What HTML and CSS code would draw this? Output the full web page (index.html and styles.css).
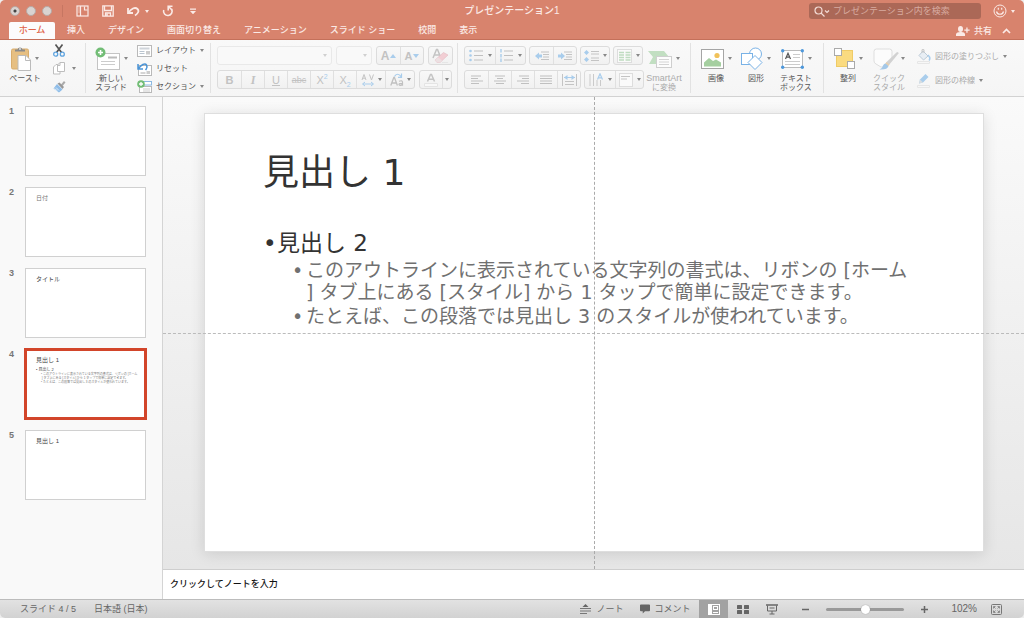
FILE: index.html
```html
<!DOCTYPE html>
<html lang="ja">
<head>
<meta charset="utf-8">
<title>プレゼンテーション1</title>
<link rel="stylesheet" href="styles.css">
</head>
<body>
<svg class="defs" aria-hidden="true">
  <symbol id="caret" viewBox="0 0 4 3"><path d="M0 0h4L2 3z" fill="currentColor"/></symbol>
</svg>
<div class="app">
  <header class="header">
    <div class="titlebar">
      <div class="title-left">
        <div class="lights"><button class="light edited" aria-label="閉じる"></button><button class="light" aria-label="しまう"></button><button class="light" aria-label="拡大"></button></div>
        <div class="quick">
          <button class="bare" aria-label="サイドバー"><svg width="13" height="12" viewBox="0 0 13 12" fill="none" stroke="currentColor" stroke-width="1.2"><rect x="1" y="1" width="11" height="10"/><path d="M4.500 1v10M8.500 1.500v3.500h3M2.500 3h1M2.500 5h1M2.500 7h1"/></svg></button>
          <button class="bare" aria-label="保存"><svg width="12" height="12" viewBox="0 0 12 12" fill="none" stroke="currentColor" stroke-width="1.3"><path d="M.8.8h10.400v10.400H.8z"/><path d="M2.500 1v4.500h7V1M3.500 11V8h5v3"/><path d="M5 8.500v2.500" stroke-width="1.600"/></svg></button>
          <button class="bare undo" aria-label="元に戻す"><svg width="13" height="11" viewBox="0 0 13 11" fill="none" stroke="currentColor" stroke-width="1.800"><path d="M1 2v5h5"/><path d="M1.500 6.500C4 3 8 .5 10.500 3c2 2 .5 4.500-2.500 6.500"/></svg><svg class="caret"><use href="#caret"/></svg></button>
          <button class="bare redo" aria-label="やり直し"><svg width="12" height="12" viewBox="0 0 12 12" fill="none" stroke="currentColor" stroke-width="1.600"><path d="M1.700 5A4.300 4.300 0 1 0 9.500 4"/><path d="M10.500 1.200H6.200v4.300"/><path d="M6.500 1.500L10 5"/></svg></button>
          <button class="bare" aria-label="カスタマイズ"><svg width="8" height="7" viewBox="0 0 8 7"><path d="M1 .5h6v1.200H1zM1 3h6L4 6.200z" fill="currentColor"/></svg></button>
        </div>
      </div>
      <h1 class="doc-title">プレゼンテーション1</h1>
      <div class="title-right">
        <label class="search"><svg width="16" height="11" viewBox="0 0 16 11" fill="none" stroke="#f3dcd6" stroke-width="1.200"><circle cx="4.500" cy="4.500" r="3.500"/><path d="M7 7l3.500 3.500M11 4.500l2 2 2-2"/></svg><input type="search" placeholder="プレゼンテーション内を検索" aria-label="プレゼンテーション内を検索"></label>
        <button class="bare smile" aria-label="フィードバック"><svg width="14" height="14" viewBox="0 0 14 14" fill="none" stroke="currentColor"><circle cx="7" cy="7" r="6"/><path d="M3.500 7.500a3.600 3.600 0 0 0 7 0M5.300 3.800v2M8.700 3.800v2" stroke-width="1.200"/></svg><svg class="caret"><use href="#caret"/></svg></button>
      </div>
    </div>
    <div class="tabbar">
      <nav class="tabs">
        <button class="tab active">ホーム</button><button class="tab">挿入</button><button class="tab">デザイン</button><button class="tab">画面切り替え</button><button class="tab">アニメーション</button><button class="tab">スライド ショー</button><button class="tab">校閲</button><button class="tab">表示</button>
      </nav>
      <div class="share-area">
        <button class="bare share"><svg width="14" height="10" viewBox="0 0 14 10" fill="currentColor"><ellipse cx="4.500" cy="3" rx="2.500" ry="3"/><path d="M0 10V8.200C.3 6.500 2 6.300 4.500 6s4.300.5 4.500 2.200V10zM10.300 1.500h1.300v2h2v1.300h-2v2h-1.300v-2h-2V3.500h2z"/></svg>共有</button>
        <button class="bare" aria-label="リボンを折りたたむ"><svg width="9" height="6" viewBox="0 0 9 6" fill="none" stroke="currentColor" stroke-width="1.700"><path d="M1 5l3.500-3.500L8 5"/></svg></button>
      </div>
    </div>
  </header>

  <section class="ribbon">
    <div class="group clip">
      <button class="big"><span class="pic"><svg width="20" height="25" viewBox="0 0 20 25"><rect x=".5" y="3" width="17" height="20" rx="1.500" fill="#e6bf82" stroke="#d9ad6c"/><path d="M4 5.500V3.500h2.500a2.600 2.600 0 0 1 5 0H14v2z" fill="#8b8b8b"/><circle cx="9" cy="3" r="1" fill="#ddd"/><path d="M7 9.500h8l4.500 4.500v10.500H7z" fill="#fff" stroke="#bbb"/><path d="M14.500 9.500v5h5" fill="none" stroke="#bbb"/></svg><svg class="caret"><use href="#caret"/></svg></span><span>ペースト</span></button>
      <div class="stack">
        <button class="mini" aria-label="切り取り"><svg width="12" height="13" viewBox="0 0 12 13" fill="none"><path d="M2.500.5l6 8M9.500.5l-6 8" stroke="#555" stroke-width="1.700"/><circle cx="2.700" cy="10.200" r="2" stroke="#5da3df" stroke-width="1.300"/><circle cx="9.300" cy="10.200" r="2" stroke="#5da3df" stroke-width="1.300"/></svg></button>
        <button class="mini" aria-label="コピー"><svg width="12" height="13" viewBox="0 0 12 13" fill="#fff" stroke="#bdbdbd"><path d="M.5 5l2.500-2.500h4v9.500H.5z"/><path d="M4.500 3L7 .5h4.500v9h-7z"/><path d="M4.500 3.500H7V.5" fill="none"/></svg><svg class="caret"><use href="#caret"/></svg></button>
        <button class="mini" aria-label="書式のコピー"><svg width="13" height="13" viewBox="0 0 13 13"><path d="M8 4.500L11 1l1.500 1.500L9.500 6z" fill="#aaa"/><path d="M4.500 3.500l2-1 4.500 4.500-1.500 2z" fill="#989898"/><path d="M4 4l5.500 5.500L6 12.500.5 8.500z" fill="#8dbce8"/><path d="M3 7.500l3 3M1.500 8.500l3 2.500" stroke="#dcebf8"/></svg></button>
      </div>
    </div>
    <div class="group slides">
      <button class="big"><span class="pic"><svg width="25" height="24" viewBox="0 0 25 24"><rect x="2.500" y="6.500" width="22" height="16" fill="#fff" stroke="#c4c4c4"/><path d="M13 10.500h9" stroke="#bbb" stroke-width="2"/><path d="M6 14.500h14M6 17.500h14" stroke="#ccc"/><circle cx="5.500" cy="5.500" r="5" fill="#72bd76"/><path d="M5.500 3v5M3 5.500h5" stroke="#fff" stroke-width="1.600"/></svg><svg class="caret"><use href="#caret"/></svg></span><span>新しい<br>スライド</span></button>
      <div class="stack">
        <button class="mini"><svg width="15" height="12" viewBox="0 0 15 12"><rect x=".5" y=".5" width="14" height="11" fill="#fff" stroke="#b9b9b9"/><path d="M2.500 2.500h10v2h-10z" fill="#cfd4da"/><path d="M2.500 6.500h5M2.500 8.500h5" stroke="#b9c4cf"/><rect x="9" y="6" width="4" height="3.500" fill="#ccc"/></svg>レイアウト<svg class="caret"><use href="#caret"/></svg></button>
        <button class="mini"><svg width="15" height="14" viewBox="0 0 15 14"><rect x="1.500" y="3.500" width="13" height="10" fill="#fff" stroke="#b9b9b9"/><path d="M3.500 11h5" stroke="#aaa"/><rect x="9.500" y="9" width="3.500" height="3" fill="#ccc"/><path d="M1 2v5h5M1.500 6.500C4 3 8 .5 9.500 3s.5 3-1 5" fill="none" stroke="#4b94d6" stroke-width="1.500"/></svg>リセット</button>
        <button class="mini"><svg width="15" height="13" viewBox="0 0 15 13"><rect x="5.500" y="1.500" width="9" height="3.500" fill="#fff" stroke="#8cb9e2"/><rect x="2.500" y="6.500" width="12" height="6" fill="#fff" stroke="#b9b9b9"/><path d="M6 9h7M6 11h7" stroke="#ccc"/><circle cx="4" cy="4" r="3.800" fill="#72bd76"/><path d="M4 2v4M2 4h4" stroke="#fff" stroke-width="1.300"/></svg>セクション<svg class="caret"><use href="#caret"/></svg></button>
      </div>
    </div>
    <div class="group rows">
      <div class="row">
        <div class="pick font"><select disabled aria-label="フォント"><option></option></select><svg class="caret"><use href="#caret"/></svg></div>
        <div class="pick size"><select disabled aria-label="フォント サイズ"><option></option></select><svg class="caret"><use href="#caret"/></svg></div>
        <div class="seg"><button disabled aria-label="拡大" class="cell"><b class="letter big-a">A</b><svg width="6" height="4" viewBox="0 0 6 4"><path d="M0 4h6L3 0z" fill="#a9cdec"/></svg></button><button disabled aria-label="縮小" class="cell"><b class="letter">A</b><svg width="6" height="4" viewBox="0 0 6 4"><path d="M0 0h6L3 4z" fill="#a9cdec"/></svg></button></div>
        <div class="seg"><button disabled aria-label="書式のクリア" class="cell"><svg width="17" height="16" viewBox="0 0 17 16"><path d="M1 10L4.500 1.500h1L8.500 9M2.500 7h4.500" fill="none" stroke="#c4c4c4" stroke-width="1.500"/><path d="M3 12l8.500-7.500 4.500 2.500-8 7.500H5z" fill="#f2ced4" stroke="#e3bac1" stroke-width=".6"/><path d="M3 12l3-2.800 4 3.400-2 1.900H5z" fill="#ece0e2"/><path d="M10 14.500h6" stroke="#ddd" stroke-width=".6"/></svg></button></div>
      </div>
      <div class="row">
        <div class="seg"><button disabled class="cell"><b>B</b></button><button disabled class="cell serif"><i>I</i></button><button disabled class="cell"><u>U</u></button><button disabled class="cell strike"><s>abc</s></button><button disabled class="cell"><span>X<sup>2</sup></span></button><button disabled class="cell"><span>X<sub>2</sub></span></button><button disabled aria-label="文字の間隔" class="cell wide"><svg width="14" height="14" viewBox="0 0 14 14" fill="none"><path d="M1 7l2-5.500L5 7M1.800 5.200h2.400M8.500 1.500l2 5.500 2-5.500" stroke="#c4c4c4"/><path d="M2 11h10M4 9l-2.500 2L4 13M10 9l2.500 2-2.500 2" stroke="#a9cdec"/></svg><svg class="caret"><use href="#caret"/></svg></button><button disabled aria-label="文字種の変換" class="cell wide"><svg width="14" height="14" viewBox="0 0 14 14" fill="none"><path d="M.8 12.500L3.800 4.500h.6l3 8M2 10h4.400" stroke="#c0c0c0" stroke-width="1.300"/><path d="M9 8.300q3.500-1.500 3.500 1v3.500M12.500 10.300q-3.800 0-3.500 1.300c.5 1.300 3 1 3.500-.5" stroke="#c0c0c0" stroke-width="1.200"/><path d="M4.500 3.500C6 .5 9 .5 11 3.500M11.500.5v3.800H8" stroke="#a9cdec" stroke-width="1.200"/></svg><svg class="caret"><use href="#caret"/></svg></button></div>
        <div class="seg"><button disabled aria-label="フォントの色" class="cell fontcolor"><svg width="14" height="14" viewBox="0 0 14 14" fill="none"><path d="M3.500 8.500l3-7h1l3 7M4.700 6.200h4.600" stroke="#c4c4c4" stroke-width="1.500"/><path d="M.5 10.500h13v3H.5z" fill="#f8f8f8" stroke="#e4e4e4"/></svg></button><button disabled class="cell drop" aria-label="その他の色"><svg class="caret"><use href="#caret"/></svg></button></div>
      </div>
    </div>
    <div class="group para">
      <div class="rows">
        <div class="row">
          <div class="seg"><button disabled aria-label="箇条書き" class="cell list"><svg width="15" height="13" viewBox="0 0 15 13"><path d="M5 2h9M5 6.500h9M5 11h9" stroke="#c0c0c0"/><g fill="#a9cdec"><circle cx="1.500" cy="2" r="1.300"/><circle cx="1.500" cy="6.500" r="1.300"/><circle cx="1.500" cy="11" r="1.300"/></g></svg><svg class="caret"><use href="#caret"/></svg></button><button disabled aria-label="段落番号" class="cell list"><svg width="15" height="13" viewBox="0 0 15 13"><path d="M5 2h9M5 6.500h9M5 11h9" stroke="#c0c0c0"/><path d="M2 0v3.500M2 5v3.500M2 9.500V13" stroke="#a9cdec" stroke-width="1.400"/></svg><svg class="caret"><use href="#caret"/></svg></button></div>
          <div class="seg"><button disabled aria-label="インデントを減らす" class="cell"><svg width="14" height="10" viewBox="0 0 14 10"><path d="M6 1h8M8 3.500h6M8 6h6M6 8.500h8" stroke="#c4c4c4"/><path d="M0 5l4-3.500v2h3v3H4v2z" fill="#a9cdec"/></svg></button><button disabled aria-label="インデントを増やす" class="cell"><svg width="14" height="10" viewBox="0 0 14 10"><path d="M6 1h8M8 3.500h6M8 6h6M6 8.500h8" stroke="#c4c4c4"/><path d="M7 5L3 1.500v2H0v3h3v2z" fill="#a9cdec"/></svg></button></div>
          <div class="seg"><button disabled aria-label="行間" class="cell list narrow"><svg width="15" height="12" viewBox="0 0 15 12"><path d="M7 1.500h8M7 4h8M7 8h8M7 10.500h8" stroke="#c4c4c4"/><path d="M2.500 0L5 2.500 2.500 5 0 2.500zM2.500 7L5 9.500 2.500 12 0 9.500z" fill="#a9cdec"/></svg><svg class="caret"><use href="#caret"/></svg></button></div>
          <div class="seg"><button disabled aria-label="段組み" class="cell list narrow"><svg width="15" height="14" viewBox="0 0 15 14"><rect x=".5" y=".5" width="14" height="13" fill="#fafafa" stroke="#ddd"/><path d="M2 3.500h5M2 6h5M2 8.500h5M2 11h5M8.500 3.500h5M8.500 6h5M8.500 8.500h5M8.500 11h5" stroke="#bfdcc0" stroke-width="1.600"/></svg><svg class="caret"><use href="#caret"/></svg></button></div>
        </div>
        <div class="row">
          <div class="seg align"><button disabled aria-label="左揃え" class="cell"><svg width="12" height="9" viewBox="0 0 12 9"><path d="M0 1h10M0 3.500h7M0 6h12M0 8.500h8" stroke="#c0c0c0"/></svg></button><button disabled aria-label="中央揃え" class="cell"><svg width="12" height="9" viewBox="0 0 12 9"><path d="M1 1h10M3 3.500h6M0 6h12M2 8.500h8" stroke="#c0c0c0"/></svg></button><button disabled aria-label="右揃え" class="cell"><svg width="12" height="9" viewBox="0 0 12 9"><path d="M2 1h10M5 3.500h7M0 6h12M4 8.500h8" stroke="#c0c0c0"/></svg></button><button disabled aria-label="両端揃え" class="cell"><svg width="12" height="9" viewBox="0 0 12 9"><path d="M0 1h12M0 3.500h12M0 6h12M0 8.500h12" stroke="#c0c0c0"/></svg></button><button disabled aria-label="均等割り付け" class="cell"><svg width="15" height="12" viewBox="0 0 15 12" fill="none"><path d="M.5 0v12M14.500 0v12M3 7.500h9M3 10.500h9" stroke="#c4c4c4"/><path d="M2 3.500h11" stroke="#a9cdec"/><path d="M2 3.500L5.500 1v5zM13 3.500L9.500 1v5z" fill="#a9cdec"/></svg></button></div>
          <div class="seg"><button disabled aria-label="文字列の方向" class="cell list"><svg width="15" height="14" viewBox="0 0 15 14" fill="none"><path d="M1 1v12M4.500 1v12M8 7v6M11.500 7v6" stroke="#cacaca"/><path d="M8.500 6.500L11 .8l2.500 5.700M9.300 4.800h3.400" stroke="#a9cdec" stroke-width="1.200"/></svg><svg class="caret"><use href="#caret"/></svg></button><button disabled aria-label="文字の配置" class="cell list narrow"><svg width="14" height="14" viewBox="0 0 14 14"><rect x=".5" y=".5" width="13" height="13" fill="#fafafa" stroke="#ddd"/><path d="M2 3.500h9M2 6h6" stroke="#c4c4c4"/></svg><svg class="caret"><use href="#caret"/></svg></button></div>
        </div>
      </div>
      <button class="big off" disabled><span class="pic"><svg width="24" height="18" viewBox="0 0 24 18"><path d="M0 1h16l5 6-5 7H1l4-7z" fill="#c2dfc2"/><rect x="8.500" y="6.500" width="15" height="11" fill="#fdfdfd" stroke="#cfcfcf"/><path d="M11 9.500h10M11 12h10M11 14.500h10" stroke="#d4d4d4"/></svg><svg class="caret"><use href="#caret"/></svg></span><span><span class="latin">SmartArt</span><br>に変換</span></button>
    </div>
    <div class="group insert">
      <button class="big"><span class="pic"><svg width="23" height="20" viewBox="0 0 23 20"><rect x=".5" y=".5" width="22" height="19" fill="#fff" stroke="#a5a5a5"/><circle cx="16" cy="6.500" r="2.600" fill="#f1c25a"/><path d="M3 17.500v-4L8 9l4 3 3-1.500 5 3v4z" fill="#a5cfa0"/></svg><svg class="caret"><use href="#caret"/></svg></span><span>画像</span></button>
      <button class="big"><span class="pic"><svg width="22" height="24" viewBox="0 0 22 24" fill="#fff" stroke="#79b2e6"><circle cx="14.500" cy="7" r="6"/><rect x=".5" y="6.500" width="11" height="11"/><path d="M14 8.500l7 7-7 7-7-7z"/></svg><svg class="caret"><use href="#caret"/></svg></span><span>図形</span></button>
      <button class="big"><span class="pic"><svg width="23" height="20" viewBox="0 0 23 20"><rect x="1.500" y="1.500" width="20" height="17" fill="#fff" stroke="#bbb"/><path d="M4.500 10L7 4.200 9.500 10M5.300 8.200h3.400" fill="none" stroke="#555" stroke-width="1.200"/><path d="M12 5.500h7M12 8.500h7M4 12.500h15M4 15.500h15" stroke="#ccc"/><g fill="#4d98dc"><circle cx="1.700" cy="1.700" r="1.700"/><circle cx="21.300" cy="1.700" r="1.700"/><circle cx="1.700" cy="18.300" r="1.700"/><circle cx="21.300" cy="18.300" r="1.700"/></g></svg><svg class="caret"><use href="#caret"/></svg></span><span>テキスト<br>ボックス</span></button>
    </div>
    <div class="group draw">
      <button class="big"><span class="pic"><svg width="21" height="21" viewBox="0 0 21 21"><rect x="2.500" y="2.500" width="16" height="16" fill="#fadb80" stroke="#efcb66"/><rect x=".5" y=".5" width="7" height="7" fill="#fff" stroke="#aaa"/><rect x="13.500" y="13.500" width="7" height="7" fill="#fff" stroke="#aaa"/></svg><svg class="caret"><use href="#caret"/></svg></span><span>整列</span></button>
      <button class="big off quickstyle" disabled><span class="pic"><svg width="26" height="24" viewBox="0 0 26 24"><path d="M3.500 2h13q2.500 0 2.500 2.500V11l-8 9H8l-5-3q-2-1-2-3V4.500Q1 2 3.500 2z" fill="#fcfcfc" stroke="#dedede"/><path d="M24 5q2 0 1.500 1.500L16 18l-3-2.500z" fill="#d2d2d2"/><path d="M13.500 15l3 2.500-1.500 2-3-2.500z" fill="#e7cfae"/><path d="M12.500 16.500l3 2.500q-1 4-9 3.500 3-1 3.500-4 1-2 2.500-2z" fill="#a4c8e8"/></svg><svg class="caret"><use href="#caret"/></svg></span><span>クイック<br>スタイル</span></button>
      <div class="stack fills">
        <button class="mini" disabled><svg width="14" height="15" viewBox="0 0 14 15"><path d="M6 2l5 5-4.500 4L2 6.500z" fill="#e8eef4" stroke="#bccbd8"/><path d="M5 4V.7h2V4" fill="none" stroke="#c6c6c6"/><path d="M11 6q3 3 1 5.500" stroke="#a9cdec" stroke-width="1.500" fill="none"/><path d="M.5 12.500h12v2H.5z" fill="#f7f7f7" stroke="#e6e6e6"/></svg>図形の塗りつぶし<svg class="caret"><use href="#caret"/></svg></button>
        <button class="mini" disabled><svg width="14" height="15" viewBox="0 0 14 15"><path d="M2 10.500l1-4L8.500 1l3 3L6 9.500z" fill="#a9cdec"/><path d="M2 10.500l1-4 3 3z" fill="#d9dde0"/><path d="M.5 12.500h12v2H.5z" fill="#f7f7f7" stroke="#e6e6e6"/></svg>図形の枠線<svg class="caret"><use href="#caret"/></svg></button>
      </div>
    </div>
  </section>

  <main class="main">
    <ol class="thumbs">
      <li><span class="num">1</span><button class="thumb" aria-label="スライド 1"></button></li>
      <li><span class="num">2</span><button class="thumb"><span class="t-light">日付</span></button></li>
      <li><span class="num">3</span><button class="thumb"><span>タイトル</span></button></li>
      <li><span class="num">4</span><button class="thumb selected"><span>見出し 1</span><span class="t-body"><span class="t-h2">• 見出し 2</span><span class="t-li">• このアウトラインに表示されている文字列の書式は、リボンの [ホーム<br>&nbsp;] タブ上にある [スタイル] から 1 タップで簡単に設定できます。</span><span class="t-li">• たとえば、この段落では見出し 3 のスタイルが使われています。</span></span></button></li>
      <li><span class="num">5</span><button class="thumb"><span>見出し 1</span></button></li>
    </ol>
    <div class="editor">
      <div class="workspace">
        <article class="slide">
          <h2 class="slide-title">見出し 1</h2>
          <ul class="outline">
            <li><span>見出し 2</span></li>
          </ul>
          <ul class="outline sub">
            <li><span>このアウトラインに表示されている文字列の書式は、リボンの [ホーム<br>] タブ上にある [スタイル] から 1 タップで簡単に設定できます。</span></li>
            <li><span>たとえば、この段落では見出し 3 のスタイルが使われています。</span></li>
          </ul>
        </article>
        <i class="guide across"></i>
        <i class="guide down"></i>
      </div>
      <div class="notes" contenteditable="true">クリックしてノートを入力</div>
    </div>
  </main>

  <footer class="status">
    <span>スライド 4 / 5</span>
    <span class="language">日本語 (日本)</span>
    <div class="status-right">
      <button class="bare"><svg width="11" height="10" viewBox="0 0 11 10"><path d="M2.500 3h6l-3-3z" fill="#666"/><path d="M0 4.500h11M0 7h11M0 9.500h7" stroke="#777"/></svg>ノート</button>
      <button class="bare comment"><svg width="10" height="10" viewBox="0 0 11 10"><path d="M1 0h9q1 0 1 1v5.500q0 1-1 1H5.500L3 10V7.500H1q-1 0-1-1V1q0-1 1-1z" fill="#666"/></svg>コメント</button>
      <button class="bare view current" aria-label="標準"><svg width="12" height="11" viewBox="0 0 12 11" fill="none" stroke="#fff"><rect x=".5" y=".5" width="11" height="10"/><path d="M0 0h4v11H0z" fill="#fff" stroke="none"/><rect x="5.500" y="2.500" width="4" height="3"/><path d="M5 8.500h5"/></svg></button>
      <button class="bare view" aria-label="スライド一覧"><svg width="12" height="9" viewBox="0 0 12 9" fill="#666"><rect width="5" height="4" rx=".5"/><rect x="7" width="5" height="4" rx=".5"/><rect y="5" width="5" height="4" rx=".5"/><rect x="7" y="5" width="5" height="4" rx=".5"/></svg></button>
      <button class="bare view" aria-label="スライド ショー"><svg width="12" height="11" viewBox="0 0 12 11" fill="none" stroke="#666"><path d="M0 1h12" stroke-width="1.500"/><path d="M1.500 1.500V7h9V1.500M3.500 4h5M6 7v3M3.500 10h5"/></svg></button>
      <button class="bare zoom-out" aria-label="縮小"><svg width="7" height="7" viewBox="0 0 7 7"><path d="M0 3.500h7" stroke="#666" stroke-width="1.500"/></svg></button>
      <input class="zoom" type="range" min="0" max="100" value="50" aria-label="ズーム">
      <button class="bare zoom-in" aria-label="拡大"><svg width="7" height="7" viewBox="0 0 7 7"><path d="M0 3.500h7M3.500 0v7" stroke="#666" stroke-width="1.500"/></svg></button>
      <span class="percent">102%</span>
      <button class="bare" aria-label="ウィンドウに合わせる"><svg width="11" height="11" viewBox="0 0 11 11" fill="none" stroke="#777"><rect x=".5" y=".5" width="10" height="10" rx="1"/><path d="M2.500 4.500v-2h2M6.500 2.500h2v2M8.500 6.500v2h-2M4.500 8.500h-2v-2M3 3l1.500 1.500M8 3L6.500 4.500M3 8l1.500-1.500M8 8L6.500 6.500" stroke-width=".8"/></svg></button>
    </div>
  </footer>
</div>
</body>
</html>
```

FILE: styles.css
```css
* { box-sizing: border-box; }
body { margin: 0; background: #eee; }
button, input, select { font: inherit; color: inherit; margin: 0; padding: 0; border: 0; background: none; }
svg { display: block; flex: none; }
.defs { position: absolute; width: 0; height: 0; }
.caret { width: 4px; height: 3px; }

.app {
  display: flex;
  flex-direction: column;
  min-height: 100vh;
  border-radius: 5px;
  overflow: hidden;
  background: #f9f9f9;
  color: #555;
  font: 9px/12px "Liberation Sans", "Noto Sans CJK JP", sans-serif;
  white-space: nowrap;
}
.bare { display: flex; align-items: center; gap: 5px; }

/* Title bar and tabs */
.header { background: #d8836d; border-bottom: 1px solid #c4705a; color: #fbeae6; }
.titlebar { display: grid; grid-template-columns: 1fr auto 1fr; align-items: center; height: 22px; }
.title-left, .quick, .lights { display: flex; align-items: center; }
.lights { gap: 6px; padding: 0 10px; }
.light { width: 10px; height: 10px; border-radius: 50%; background: #d9d3d1; border: 1px solid #b9a8a3; }
.edited { background: radial-gradient(circle, #444 0 1px, #d9d3d1 2px); }
.quick { gap: 13px; padding-left: 13px; border-left: 1px solid #c67662; }
.redo { margin-right: 2px; }
.doc-title { margin: 0; font-size: 10px; font-weight: 500; line-height: 14px; }
.title-right { display: flex; justify-content: flex-end; align-items: center; gap: 12px; padding-right: 9px; }
.search { display: flex; align-items: center; gap: 3px; width: 172px; height: 16px; padding: 0 5px; border-radius: 3px; background: #ab6857; }
.search input { flex: 1; min-width: 0; outline: 0; color: #fff; }
.search input::placeholder { color: #d8aba0; opacity: 1; }
.smile { gap: 4px; }
.tabbar { display: flex; justify-content: space-between; align-items: center; height: 17px; }
.tabs { display: flex; align-items: center; gap: 23px; padding-left: 9px; }
.tab { font-weight: 500; line-height: 17px; }
.tab.active { width: 46px; margin-right: -11px; border-radius: 2px 2px 0 0; background: #fcfcfc; color: #e0654a; }
.share-area { display: flex; align-items: center; gap: 10px; padding-right: 13px; }
.share { gap: 4px; font-weight: 500; }

/* Ribbon */
.ribbon { display: flex; height: 57px; padding: 3px 0; border-bottom: 1px solid #d2d2d2; background: linear-gradient(#f9f9f9, #f5f5f5); font-size: 8px; line-height: 9px; }
.group { display: flex; flex: none; border-right: 1px solid #e2e2e2; }
.group:last-child { border: 0; }
.big { display: flex; flex-direction: column; align-items: center; align-self: flex-start; width: 40px; }
.pic { display: flex; align-items: center; gap: 4px; height: 31px; }
.big .caret, .mini .caret { color: #888; }
.stack { display: flex; flex-direction: column; gap: 3px; }
.mini { display: flex; flex: none; align-items: center; gap: 4px; height: 15px; }
.off, .mini:disabled { color: #aaa; }
.latin { font-size: 9px; }
.clip { width: 86px; padding-left: 5px; gap: 8px; }
.clip .mini { gap: 7px; }
.slides { width: 125px; padding-left: 4px; gap: 5px; }
.slides .big { width: 42px; }
.rows { display: flex; flex-direction: column; gap: 5px; padding-top: 3px; }
.group.rows { width: 247px; padding-left: 6px; }
.row { display: flex; gap: 4px; }
.para .row { gap: 3px; }
.pick { position: relative; display: flex; align-items: center; height: 19px; border: 1px solid #e9e9e9; border-radius: 3px; background: #f9f9f9; color: #d0d0d0; }
.pick select { width: 100%; height: 100%; appearance: none; opacity: 1; }
.pick .caret { position: absolute; right: 4px; pointer-events: none; }
.font { width: 115px; }
.size { width: 36px; }
.seg { display: flex; height: 19px; border: 1px solid #dcdcdc; border-radius: 3px; background: linear-gradient(#f8f8f8, #f1f1f1); color: #c2c2c2; }
.cell { display: flex; align-items: center; justify-content: center; gap: 1px; width: 23px; font-size: 11px; line-height: 12px; }
.cell + .cell { border-left: 1px solid #e0e0e0; }
.cell .caret { color: #888; margin-left: 2px; }
.letter { font-size: 11px; }
.big-a { font-size: 12px; }
.serif { font-family: "Liberation Serif", serif; font-size: 12px; font-weight: 700; }
.strike { font-size: 9px; }
.cell sup, .cell sub { font-size: 7px; line-height: 0; color: #a9cdec; }
.wide { width: 29px; }
.fontcolor { width: 22px; }
.cell.drop { width: 9px; }
.drop .caret { margin: 0; }
.list { width: 30px; gap: 2px; }
.narrow { width: 28px; }
.para { width: 233px; padding-left: 6px; }
.insert { width: 133px; padding-left: 5px; }
.draw { padding-left: 4px; }
.quickstyle .pic { gap: 2px; }
.quickstyle { margin-left: 1px; }
.fills { gap: 9px; padding: 6px 0 0 8px; }

/* Slide list */
.main { display: flex; flex: 1; }
.thumbs { display: flex; flex-direction: column; gap: 11px; width: 163px; margin: 0; padding: 9px 0; border-right: 1px solid #d4d4d4; list-style: none; }
.thumbs li { display: grid; grid-template-columns: 25px 121px; height: 70px; }
.num { padding-left: 9px; line-height: 10px; font-weight: 700; color: #777; }
.thumb { display: flex; flex-direction: column; gap: 4px; padding: 6px 10px; border: 1px solid #d0d0d0; background: #fff; color: #444; font-size: 6px; line-height: 8px; text-align: left; overflow: hidden; }
.selected { padding: 5px 9px; border: 2px solid #d2452a; box-shadow: 0 0 0 1px #d2452a; }
.t-light { color: #777; }
.t-body { display: flex; flex-direction: column; font-size: 3px; line-height: 4px; }
.t-h2 { font-size: 4px; }
.t-li { padding-left: 5px; color: #777; }

/* Editing area */
.editor { display: flex; flex: 1; flex-direction: column; min-width: 0; }
.workspace { position: relative; display: flex; flex: 1; padding: 16px 40px 17px 41px; background: linear-gradient(#fafafa, #e6e6e6); }
.slide { flex: 1; min-width: 0; padding: 39px 40px 39px 58px; border: 1px solid #dedede; background: #fff; box-shadow: 0 2px 14px rgba(0, 0, 0, .12); color: #333; font-family: "DejaVu Sans", "Noto Sans CJK JP", sans-serif; }
.slide-title { margin: 0 0 36px; font-size: 36px; font-weight: 400; line-height: 40px; }
.outline { display: flex; flex-direction: column; gap: 2px; margin: 0; padding: 0; list-style: none; font-size: 23px; line-height: 28px; }
.outline li { display: grid; grid-template-columns: 14px auto; }
.outline li::before { content: "•"; }
.outline.sub { margin-top: 2px; padding-left: 29px; color: #707070; font-size: 19px; line-height: 22px; }
.guide { position: absolute; }
.across { left: 0; right: 0; top: 50%; border-top: 1px dashed #bbb; }
.down { top: 0; bottom: 0; left: 50%; border-left: 1px dashed #aaa; }
.notes { height: 30px; padding: 8px 7px; border-top: 1px solid #cecece; background: #fff; color: #111; font-weight: 500; outline: 0; }

/* Status bar */
.status { display: flex; align-items: center; height: 19px; padding: 0 22px 0 20px; border-top: 1px solid #bcbcbc; background: linear-gradient(#e2e2e2, #d2d2d2); color: #666; }
.language { margin-left: 18px; }
.status-right { display: flex; align-items: center; margin-left: auto; }
.comment { gap: 4px; margin: 0 9px 0 17px; }
.view { justify-content: center; width: 29px; height: 18px; }
.current { background: #a2a2a2; }
.zoom-out { margin: 0 17px 0 16px; }
.zoom { appearance: none; width: 78px; height: 9px; }
.zoom::-webkit-slider-runnable-track { height: 3px; border-radius: 2px; background: #999; }
.zoom::-webkit-slider-thumb { appearance: none; width: 9px; height: 9px; margin-top: -3px; border-radius: 50%; background: #fff; box-shadow: 0 0 1px #777; }
.zoom-in { margin: 0 23px 0 17px; }
.percent { margin-right: 14px; font-size: 10px; }
```
